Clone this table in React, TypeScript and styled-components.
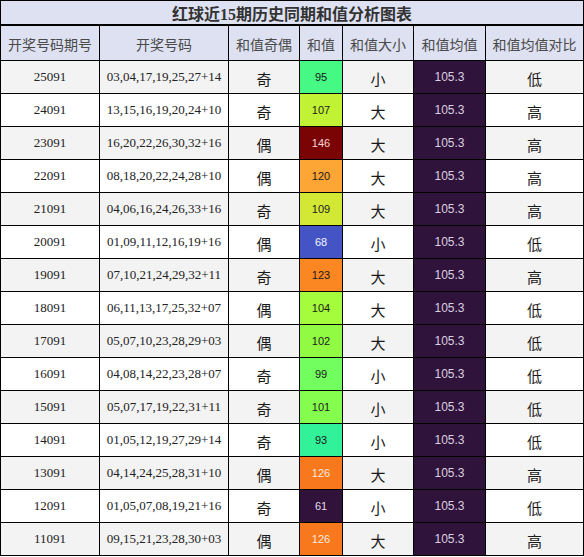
import styled, { createGlobalStyle } from "styled-components"

const GlobalStyle = createGlobalStyle`
    body {
        margin: 0;
        background: #ffffff;
        font-family: "Liberation Serif", "Noto Sans CJK SC", serif;
    }
`

const COLUMNS = "98px 128px 70px 42px 70px 71px 97px"

const Table = styled.div`
    width: 584px;
    box-sizing: border-box;
    border: 1px solid #000;
    background: #000;
    display: flex;
    flex-direction: column;
    gap: 1px;
`

const Title = styled.div`
    height: 24px;
    box-sizing: border-box;
    border-bottom: 1px solid #000;
    background: #dde1f1;
    color: #333;
    font-family: "Liberation Serif", "Noto Sans CJK SC", serif;
    font-weight: bold;
    font-size: 16px;
    display: flex;
    align-items: center;
    justify-content: center;
`

const Row = styled.div<{ $head?: boolean }>`
    display: grid;
    grid-template-columns: ${COLUMNS};
    gap: 1px;
    height: ${(p) => (p.$head ? "34px" : "32px")};
`

const HeadCell = styled.div`
    background: #dde1f1;
    color: #4a4a4a;
    font-family: "Noto Sans CJK SC", sans-serif;
    font-size: 14px;
    padding-top: 2px;
    box-sizing: border-box;
    display: flex;
    align-items: center;
    justify-content: center;
    white-space: nowrap;
`

const Cell = styled.div<{ $alt: boolean }>`
    background: ${(p) => (p.$alt ? "#f3f3f3" : "#ffffff")};
    color: #222;
    font-size: 13px;
    box-sizing: border-box;
    display: flex;
    align-items: center;
    justify-content: center;
    white-space: nowrap;
`

const Word = styled(Cell)`
    font-family: "Noto Sans CJK SC", sans-serif;
    font-size: 15px;
    color: #1a1a1a;
    padding-top: 3px;
`

const SumCell = styled.div<{ $bg: string; $fg: string }>`
    background: ${(p) => p.$bg};
    color: ${(p) => p.$fg};
    font-family: "Liberation Sans", sans-serif;
    font-size: 11px;
    display: flex;
    align-items: center;
    justify-content: center;
`

const AvgCell = styled(SumCell)`
    font-size: 12px;
`

const sumColors: Record<number, [string, string]> = {
    61: ["#30123b", "#e6dcec"],
    68: ["#4454c4", "#f4f4ff"],
    93: ["#31f299", "#1a1a1a"],
    95: ["#46f884", "#1a1a1a"],
    99: ["#72fe5e", "#1a1a1a"],
    101: ["#85fd4e", "#1a1a1a"],
    102: ["#90fb42", "#1a1a1a"],
    104: ["#a4fc3c", "#1a1a1a"],
    107: ["#c2f234", "#1a1a1a"],
    109: ["#d3e835", "#1a1a1a"],
    120: ["#fda535", "#1a1a1a"],
    123: ["#fb8723", "#1a1a1a"],
    126: ["#f8781d", "#fbe9dc"],
    146: ["#7a0403", "#f2d6d6"],
}

const rows: [string, string, string, number, string, string][] = [
    ["25091", "03,04,17,19,25,27+14", "奇", 95, "小", "低"],
    ["24091", "13,15,16,19,20,24+10", "奇", 107, "大", "高"],
    ["23091", "16,20,22,26,30,32+16", "偶", 146, "大", "高"],
    ["22091", "08,18,20,22,24,28+10", "偶", 120, "大", "高"],
    ["21091", "04,06,16,24,26,33+16", "奇", 109, "大", "高"],
    ["20091", "01,09,11,12,16,19+16", "偶", 68, "小", "低"],
    ["19091", "07,10,21,24,29,32+11", "奇", 123, "大", "高"],
    ["18091", "06,11,13,17,25,32+07", "偶", 104, "大", "低"],
    ["17091", "05,07,10,23,28,29+03", "偶", 102, "大", "低"],
    ["16091", "04,08,14,22,23,28+07", "奇", 99, "小", "低"],
    ["15091", "05,07,17,19,22,31+11", "奇", 101, "小", "低"],
    ["14091", "01,05,12,19,27,29+14", "奇", 93, "小", "低"],
    ["13091", "04,14,24,25,28,31+10", "偶", 126, "大", "高"],
    ["12091", "01,05,07,08,19,21+16", "奇", 61, "小", "低"],
    ["11091", "09,15,21,23,28,30+03", "偶", 126, "大", "高"],
]

const headers = ["开奖号码期号", "开奖号码", "和值奇偶", "和值", "和值大小", "和值均值", "和值均值对比"]

export default function App() {
    return (
        <>
            <GlobalStyle />
            <Table>
                <Title>红球近15期历史同期和值分析图表</Title>
                <Row $head>
                    {headers.map((h) => (
                        <HeadCell key={h}>{h}</HeadCell>
                    ))}
                </Row>
                {rows.map(([issue, nums, parity, sum, size, cmp], i) => {
                    const alt = i % 2 === 0
                    const [bg, fg] = sumColors[sum]
                    return (
                        <Row key={issue}>
                            <Cell $alt={alt}>{issue}</Cell>
                            <Cell $alt={alt}>{nums}</Cell>
                            <Word $alt={alt}>{parity}</Word>
                            <SumCell $bg={bg} $fg={fg}>{sum}</SumCell>
                            <Word $alt={alt}>{size}</Word>
                            <AvgCell $bg="#30133b" $fg="#d9cfe0">105.3</AvgCell>
                            <Word $alt={alt}>{cmp}</Word>
                        </Row>
                    )
                })}
            </Table>
        </>
    )
}
